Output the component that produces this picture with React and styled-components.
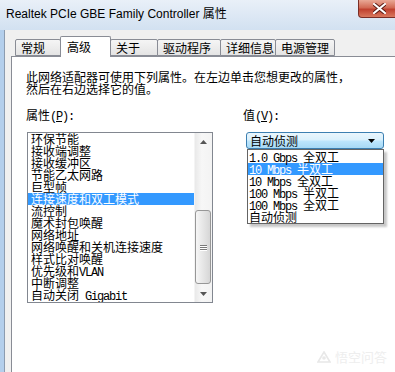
import React from "react";
import styled, { createGlobalStyle } from "styled-components";

const GlobalStyle = createGlobalStyle`
  html, body {
    margin: 0;
    padding: 0;
    background: #fff;
  }
  body {
    font-family: "Noto Sans CJK SC", sans-serif;
  }
  * {
    box-sizing: border-box;
  }
`;

const CJK = `"Noto Sans CJK SC", "Noto Sans", sans-serif`;

// 창 전체
const Window = styled.div`
  width: 395px;
  height: 372px;
  overflow: hidden;
  position: relative;
  display: flex;
  flex-direction: column;
  background: #b4cfec;
`;

// 제목 표시줄
const TitleBar = styled.div`
  height: 30px;
  flex: none;
  display: flex;
  align-items: flex-start;
  padding-left: 6px;
  background: linear-gradient(#e9f0f8, #d2e1f1);
`;

const TitleText = styled.div`
  font-family: "Liberation Sans", ${CJK};
  font-size: 12px;
  line-height: 16px;
  margin-top: 6px;
  color: #000;
  white-space: nowrap;
`;

const CloseButton = styled.div`
  flex: none;
  margin-left: auto;
  margin-right: -6px;
  width: 43px;
  height: 18px;
  border: 1px solid #7a2e26;
  border-top: none;
  border-radius: 0 0 4px 4px;
  background: linear-gradient(#e9a896 0%, #d26a55 45%, #c0412f 55%, #d9785e 100%);
  display: flex;
  align-items: center;
  justify-content: center;
`;

// 본문
const Body = styled.div`
  flex: 1;
  display: flex;
  flex-direction: column;
  margin-left: 4px;
  border-left: 1px solid #8c9cb0;
  background: #f0f0f0;
  padding: 6px 0 0 6px;
`;

const TabStrip = styled.div`
  height: 20px;
  flex: none;
  display: flex;
  align-items: flex-end;
  padding-left: 4px;
  position: relative;
  z-index: 1;
`;

const Tab = styled.div`
  width: ${(p) => p.$w}px;
  height: ${(p) => (p.$active ? 21 : 17)}px;
  margin-left: -1px;
  margin-bottom: ${(p) => (p.$active ? -1 : 0)}px;
  padding: ${(p) => (p.$active ? "3px 0 0 6px" : "1px 0 0 5px")};
  border: 1px solid #898c95;
  border-bottom: ${(p) => (p.$active ? "none" : "1px solid #898c95")};
  border-radius: 2px 2px 0 0;
  background: ${(p) =>
    p.$active ? "#fff" : "linear-gradient(#f5f5f5, #e4e4e4)"};
  font-family: ${CJK};
  font-size: 12px;
  line-height: 14px;
  color: #000;
  white-space: nowrap;
  position: relative;
  z-index: ${(p) => (p.$active ? 2 : 1)};
  &:first-child {
    margin-left: 0;
  }
`;

const Panel = styled.div`
  flex: 1;
  background: #fff;
  border: 1px solid #898c95;
  border-right: none;
  border-bottom: none;
  padding: 14px 0 0 14px;
`;

const Description = styled.div`
  font-family: ${CJK};
  font-size: 12px;
  line-height: 12px;
  color: #000;
`;

const FieldRow = styled.div`
  display: flex;
  gap: 30px;
  margin-top: 14px;
`;

const Column = styled.div`
  width: ${(p) => p.$w}px;
  position: relative;
`;

const Label = styled.div`
  font-family: ${CJK};
  font-size: 12px;
  line-height: 12px;
  color: #000;
`;

const Latin = styled.span`
  font-family: "Liberation Mono", monospace;
  font-size: 12px;
  letter-spacing: -1.2px;
`;

// 속성 목록
const ListBox = styled.div`
  margin: 9px 0 0 1px;
  width: 186px;
  height: 171px;
  border: 1px solid #828790;
  display: flex;
  background: #fff;
`;

const ListRows = styled.div`
  flex: 1;
  overflow: hidden;
`;

const ListItem = styled.div`
  height: 12px;
  line-height: 12px;
  padding-left: 3px;
  font-family: ${CJK};
  font-size: 12px;
  white-space: nowrap;
  color: ${(p) => (p.$selected ? "#fff" : "#000")};
  background: ${(p) => (p.$selected ? "#3399ff" : "transparent")};
`;

const ScrollBar = styled.div`
  width: 18px;
  flex: none;
  display: flex;
  flex-direction: column;
  background: linear-gradient(90deg, #e9e9e9, #f7f7f7 40%, #f3f3f3);
  border-left: 1px solid #f4f4f4;
`;

const ScrollArrow = styled.div`
  height: 17px;
  flex: none;
  display: flex;
  align-items: center;
  justify-content: center;
`;

const ScrollTrack = styled.div`
  flex: 1;
`;

const ScrollThumb = styled.div`
  height: 74px;
  flex: none;
  margin: 0 1px 1px 0;
  border: 1px solid #979797;
  border-radius: 3px;
  background: linear-gradient(90deg, #f6f6f6, #e6e6e6 50%, #d6d6d6);
  display: flex;
  flex-direction: column;
  align-items: center;
  justify-content: center;
  gap: 1px;
`;

const GripLine = styled.div`
  width: 7px;
  height: 1px;
  background: #7a7a7a;
  box-shadow: 0 1px 0 #fff;
`;

// 값 콤보박스
const ComboWrap = styled.div`
  position: relative;
  margin: 9px 0 0 3px;
  width: 138px;
`;

const ComboBox = styled.div`
  height: 17px;
  border: 1px solid #3c7fb1;
  border-radius: 3px;
  background: linear-gradient(#eaf6fd 0%, #d9f0fc 48%, #bee6fd 52%, #a7d9f5 100%);
  display: flex;
  align-items: center;
  padding: 0 8px 0 3px;
  font-family: ${CJK};
  font-size: 12px;
  line-height: 15px;
  color: #000;
`;

const ComboText = styled.span`
  flex: 1;
`;

const DropList = styled.div`
  position: absolute;
  top: 100%;
  left: 1px;
  width: 137px;
  padding-top: 1px;
  border: 1px solid #646464;
  background: #fff;
  box-shadow: 3px 3px 2px rgba(0, 0, 0, 0.22);
`;

const DropItem = styled.div`
  height: 12px;
  line-height: 12px;
  padding-left: 1px;
  font-family: ${CJK};
  font-size: 12px;
  white-space: nowrap;
  color: ${(p) => (p.$selected ? "#fff" : "#000")};
  background: ${(p) => (p.$selected ? "#3399ff" : "transparent")};
`;

const Watermark = styled.div`
  position: absolute;
  right: 8px;
  bottom: 6px;
  display: flex;
  align-items: center;
  gap: 4px;
  font-family: ${CJK};
  font-size: 13px;
  color: #eeeeee;
`;

const Arrow = ({ up, color = "#555" }) => (
  <svg width="7" height="4" viewBox="0 0 7 4">
    <path d={up ? "M0 4 L3.5 0 L7 4 Z" : "M0 0 L7 0 L3.5 4 Z"} fill={color} />
  </svg>
);

const properties = [
  "环保节能",
  "接收端调整",
  "接收缓冲区",
  "节能乙太网路",
  "巨型帧",
  "连接速度和双工模式",
  "流控制",
  "魔术封包唤醒",
  "网络地址",
  "网络唤醒和关机连接速度",
  "样式比对唤醒",
  <>优先级和<Latin>VLAN</Latin></>,
  "中断调整",
  <>自动关闭<Latin> Gigabit</Latin></>,
];

const values = [
  ["1.0 Gbps ", "全双工"],
  ["10 Mbps ", "半双工"],
  ["10 Mbps ", "全双工"],
  ["100 Mbps ", "半双工"],
  ["100 Mbps ", "全双工"],
  ["", "自动侦测"],
];

const tabs = [
  { label: "常规", w: 46 },
  { label: "高级", w: 51, active: true },
  { label: "关于", w: 48 },
  { label: "驱动程序", w: 64 },
  { label: "详细信息", w: 56 },
  { label: "电源管理", w: 60 },
];

const App = () => {
  return (
    <>
      <GlobalStyle />
      <Window>
        {/* 제목 표시줄 */}
        <TitleBar>
          <TitleText>Realtek PCIe GBE Family Controller 属性</TitleText>
          <CloseButton>
            <svg width="13" height="11" viewBox="0 0 13 11">
              <path
                d="M1 1 L12 10 M12 1 L1 10"
                stroke="#5a1a14"
                strokeWidth="4"
                strokeLinecap="round"
              />
              <path
                d="M1 1 L12 10 M12 1 L1 10"
                stroke="#fff"
                strokeWidth="2.2"
                strokeLinecap="round"
              />
            </svg>
          </CloseButton>
        </TitleBar>

        <Body>
          {/* 탭 */}
          <TabStrip>
            {tabs.map((t) => (
              <Tab key={t.label} $w={t.w} $active={t.active}>
                {t.label}
              </Tab>
            ))}
          </TabStrip>

          <Panel>
            <Description>
              此网络适配器可使用下列属性。在左边单击您想更改的属性，
              <br />
              然后在右边选择它的值。
            </Description>

            <FieldRow>
              {/* 속성 */}
              <Column $w={187}>
                <Label>
                  属性<Latin>(<u>P</u>):</Latin>
                </Label>
                <ListBox>
                  <ListRows>
                    {properties.map((p, i) => (
                      <ListItem key={i} $selected={i === 5}>
                        {p}
                      </ListItem>
                    ))}
                  </ListRows>
                  <ScrollBar>
                    <ScrollArrow>
                      <Arrow up />
                    </ScrollArrow>
                    <ScrollTrack />
                    <ScrollThumb>
                      <GripLine />
                      <GripLine />
                      <GripLine />
                    </ScrollThumb>
                    <ScrollArrow>
                      <Arrow />
                    </ScrollArrow>
                  </ScrollBar>
                </ListBox>
              </Column>

              {/* 값 */}
              <Column $w={141}>
                <Label>
                  值<Latin>(<u>V</u>):</Latin>
                </Label>
                <ComboWrap>
                  <ComboBox>
                    <ComboText>自动侦测</ComboText>
                    <Arrow color="#000" />
                  </ComboBox>
                  <DropList>
                    {values.map(([latin, cjk], i) => (
                      <DropItem key={i} $selected={i === 1}>
                        {latin && <Latin>{latin}</Latin>}
                        {cjk}
                      </DropItem>
                    ))}
                  </DropList>
                </ComboWrap>
              </Column>
            </FieldRow>
          </Panel>
        </Body>

        <Watermark>
          <svg width="14" height="12" viewBox="0 0 14 12">
            <path d="M7 1 L13 11 L1 11 Z" fill="none" stroke="#e8e8e8" strokeWidth="1.6" />
            <circle cx="7" cy="7" r="1.8" fill="#e8e8e8" />
          </svg>
          悟空问答
        </Watermark>
      </Window>
    </>
  );
};

export default App;
